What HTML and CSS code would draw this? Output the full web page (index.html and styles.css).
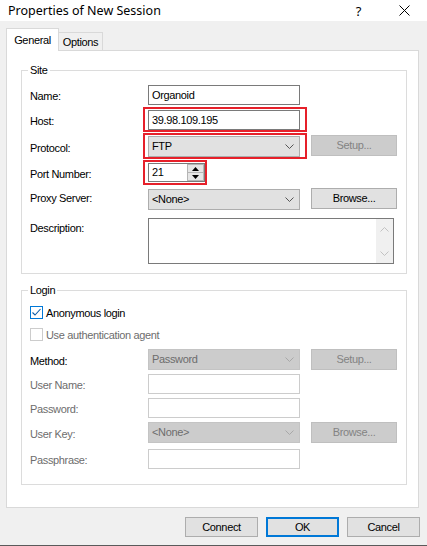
FILE: index.html
```html
<!DOCTYPE html>
<html>
<head>
<meta charset="utf-8">
<link rel="stylesheet" href="styles.css">
</head>
<body>
<header class="titlebar">
  <span class="title">Properties of New Session</span>
  <span class="cap help">?</span>
  <span class="cap close"><svg width="11" height="11" viewBox="0 0 11 11"><path d="M0.5 0.5 L10.5 10.5 M10.5 0.5 L0.5 10.5" stroke="#000" stroke-width="1" fill="none"/></svg></span>
</header>

<nav class="tabs">
  <div class="tab active">General</div>
  <div class="tab">Options</div>
</nav>

<main class="panel">
  <section class="group site">
    <span class="legend">Site</span>
    <div class="row r-name">
      <label class="lbl">Name:</label>
      <div class="ctl"><div class="field w152">Organoid</div></div>
    </div>
    <div class="row r-host">
      <label class="lbl">Host:</label>
      <div class="ctl"><div class="field w152">39.98.109.195</div><span class="mark m-host"></span></div>
    </div>
    <div class="row r-proto">
      <label class="lbl">Protocol:</label>
      <div class="ctl"><div class="select">FTP<svg class="chev" width="9" height="5" viewBox="0 0 9 5"><polyline points="0.5,0.5 4.5,4.5 8.5,0.5" fill="none" stroke="#555" stroke-width="1"/></svg></div><span class="mark m-proto"></span></div>
      <div class="btn disabled up1">Setup...</div>
    </div>
    <div class="row r-port">
      <label class="lbl">Port Number:</label>
      <div class="ctl">
        <div class="field port">21
          <span class="spin">
            <span class="sb"><svg width="7" height="4" viewBox="0 0 7 4"><polygon points="3.5,0 7,4 0,4" fill="#000"/></svg></span>
            <span class="sb"><svg width="7" height="4" viewBox="0 0 7 4"><polygon points="0,0 7,0 3.5,4" fill="#000"/></svg></span>
          </span>
        </div>
        <span class="mark m-port"></span>
      </div>
    </div>
    <div class="row r-proxy">
      <label class="lbl raise">Proxy Server:</label>
      <div class="ctl"><div class="select">&lt;None&gt;<svg class="chev" width="9" height="5" viewBox="0 0 9 5"><polyline points="0.5,0.5 4.5,4.5 8.5,0.5" fill="none" stroke="#555" stroke-width="1"/></svg></div></div>
      <div class="btn up1">Browse...</div>
    </div>
    <div class="row r-desc">
      <label class="lbl top">Description:</label>
      <div class="ctl">
        <div class="textarea">
          <span class="vscroll">
            <svg width="9" height="5" viewBox="0 0 9 5"><polyline points="0.5,4.5 4.5,0.5 8.5,4.5" fill="none" stroke="#c2c2c2" stroke-width="1"/></svg>
            <svg width="9" height="5" viewBox="0 0 9 5"><polyline points="0.5,0.5 4.5,4.5 8.5,0.5" fill="none" stroke="#c2c2c2" stroke-width="1"/></svg>
          </span>
        </div>
      </div>
    </div>
  </section>

  <section class="group login">
    <span class="legend">Login</span>
    <div class="row r-anon">
      <span class="check on"><svg width="11" height="11" viewBox="0 0 11 11"><polyline points="1.5,5.5 4,8 9.5,2" fill="none" stroke="#0a5ca8" stroke-width="1.1"/></svg></span>
      <span>Anonymous login</span>
    </div>
    <div class="row r-auth dim">
      <span class="check off"></span>
      <span>Use authentication agent</span>
    </div>
    <div class="row r-method">
      <label class="lbl">Method:</label>
      <div class="ctl"><div class="select disabled">Password<svg class="chev" width="9" height="5" viewBox="0 0 9 5"><polyline points="0.5,0.5 4.5,4.5 8.5,0.5" fill="none" stroke="#a8a8a8" stroke-width="1"/></svg></div></div>
      <div class="btn disabled">Setup...</div>
    </div>
    <div class="row r-user">
      <label class="lbl dim">User Name:</label>
      <div class="ctl"><div class="field w152 disabled"></div></div>
    </div>
    <div class="row r-pass">
      <label class="lbl dim">Password:</label>
      <div class="ctl"><div class="field w152 disabled"></div></div>
    </div>
    <div class="row r-key">
      <label class="lbl dim">User Key:</label>
      <div class="ctl"><div class="select disabled">&lt;None&gt;<svg class="chev" width="9" height="5" viewBox="0 0 9 5"><polyline points="0.5,0.5 4.5,4.5 8.5,0.5" fill="none" stroke="#a8a8a8" stroke-width="1"/></svg></div></div>
      <div class="btn disabled">Browse...</div>
    </div>
    <div class="row r-phrase">
      <label class="lbl dim">Passphrase:</label>
      <div class="ctl"><div class="field w152 disabled"></div></div>
    </div>
  </section>
</main>

<footer class="footer">
  <div class="fbtn">Connect</div>
  <div class="fbtn default">OK</div>
  <div class="fbtn">Cancel</div>
</footer>
</body>
</html>
```

FILE: styles.css
```css
* { box-sizing: border-box; }
html, body { margin: 0; padding: 0; }
body {
  width: 427px;
  height: 546px;
  overflow: hidden;
  background: #f0f0f0;
  border-bottom: 1px solid #5a5a5a;
  font-family: "Liberation Sans", Arial, sans-serif;
  font-size: 11px;
  letter-spacing: -0.35px;
  color: #000;
}

/* title bar */
.titlebar {
  height: 21px;
  background: #fff;
  display: flex;
  align-items: center;
  padding-left: 8px;
}
.title {
  font-family: "Noto Sans", "Open Sans", sans-serif;
  font-size: 12.5px;
  letter-spacing: 0;
  line-height: 21px;
}
.cap {
  display: flex;
  align-items: center;
  justify-content: center;
  height: 21px;
  font-family: "Noto Sans", sans-serif;
  letter-spacing: 0;
}
.help { margin-left: auto; width: 45px; font-size: 13px; }
.close { width: 46px; }

/* tabs */
.tabs {
  display: flex;
  align-items: flex-end;
  padding-top: 7px;
  padding-left: 6px;
}
.tab {
  height: 18px;
  width: 45px;
  margin-left: -1px;
  border: 1px solid #d9d9d9;
  border-bottom: none;
  background: #f0f0f0;
  display: flex;
  align-items: center;
  justify-content: center;
}
.tab.active {
  height: 23px;
  width: 53px;
  margin-left: 0;
  margin-bottom: -1px;
  background: #fff;
  position: relative;
  z-index: 1;
  padding-bottom: 1px;
}

/* panel */
.panel {
  margin-left: 6px;
  width: 413px;
  height: 458px;
  background: #fff;
  border: 1px solid #d9d9d9;
  padding-top: 19px;
}

.group {
  position: relative;
  margin-left: 14px;
  width: 386px;
  border: 1px solid #dcdcdc;
  padding-left: 8px;
}
.group.site { padding-bottom: 9px; }
.group.login { margin-top: 16px; padding-bottom: 15px; }
.legend {
  position: absolute;
  top: -8px;
  left: 6px;
  padding: 0 2px;
  background: #fff;
  line-height: 14px;
}

.row { display: flex; align-items: center; }
.lbl { width: 118px; flex: none; position: relative; top: 1px; }
.lbl.raise { top: -2px; }
.lbl.top { align-self: flex-start; top: 4px; }
.dim { color: #6d6d6d; }
.ctl { position: relative; flex: none; }

.r-name { margin-top: 14px; height: 20px; }
.r-host { margin-top: 5px; height: 20px; }
.r-proto { margin-top: 6px; height: 21px; }
.r-port { margin-top: 6px; height: 19px; }
.r-proxy { margin-top: 7px; height: 21px; }
.r-desc { margin-top: 8px; height: 46px; align-items: flex-start; }

.r-anon { margin-top: 14px; height: 15px; }
.r-auth { margin-top: 7px; height: 15px; }
.r-method { margin-top: 7px; height: 21px; }
.r-user { margin-top: 4px; height: 20px; }
.r-pass { margin-top: 4px; height: 20px; }
.r-key { margin-top: 4px; height: 21px; }
.r-phrase { margin-top: 6px; height: 20px; }

/* controls */
.field {
  position: relative;
  height: 20px;
  border: 1px solid #7a7a7a;
  background: #fff;
  padding-left: 3px;
  line-height: 18px;
}
.w152 { width: 152px; }
.field.disabled { border-color: #cccccc; }
.field.port { width: 57px; height: 19px; line-height: 17px; }

.spin {
  position: absolute;
  top: 0;
  right: 0;
  bottom: 0;
  width: 17px;
  display: flex;
  flex-direction: column;
}
.sb {
  flex: 1;
  background: #e6e6e6;
  border: 1px solid #b5b5b5;
  display: flex;
  align-items: center;
  justify-content: center;
}
.sb + .sb { border-top: none; }

.select {
  position: relative;
  width: 152px;
  height: 21px;
  background: #e1e1e1;
  border: 1px solid #adadad;
  padding-left: 3px;
  line-height: 19px;
}
.select.disabled { background: #cccccc; border-color: #c4c4c4; color: #6d6d6d; }
.chev {
  position: absolute;
  right: 5px;
  top: 7px;
}

.textarea {
  position: relative;
  width: 246px;
  height: 46px;
  border: 1px solid #7a7a7a;
  background: #fff;
}
.vscroll {
  position: absolute;
  top: 0;
  right: 0;
  bottom: 0;
  width: 17px;
  background: #f0f0f0;
  display: flex;
  flex-direction: column;
  justify-content: space-between;
  align-items: center;
  padding: 8px 0 7px;
}

.btn {
  flex: none;
  margin-left: 11px;
  width: 86px;
  height: 21px;
  background: #e1e1e1;
  border: 1px solid #adadad;
  text-align: center;
  line-height: 19px;
}
.btn.disabled { background: #cccccc; border-color: #bfbfbf; color: #838383; }
.btn.up1 { position: relative; top: -1px; }

.mark {
  position: absolute;
  border: 2px solid #e6202a;
  pointer-events: none;
}
.m-host { left: -5px; right: -7px; top: -3px; bottom: -2px; }
.m-proto { left: -5px; right: -7px; top: -3px; bottom: -2px; }
.m-port { left: -5px; right: -2px; top: -3px; bottom: -3px; }

/* checkboxes */
.check {
  width: 13px;
  height: 13px;
  margin-right: 3px;
  border: 1px solid #cccccc;
  background: #fff;
  display: flex;
  align-items: center;
  justify-content: center;
  flex: none;
}
.check.on { border-color: #0078d7; }

/* footer */
.footer {
  display: flex;
  justify-content: flex-end;
  gap: 8px;
  padding-right: 7px;
  margin-top: 9px;
}
.fbtn {
  width: 73px;
  height: 20px;
  background: #e1e1e1;
  border: 1px solid #adadad;
  text-align: center;
  line-height: 18px;
}
.fbtn.default { border: 2px solid #0078d7; line-height: 16px; }
```
